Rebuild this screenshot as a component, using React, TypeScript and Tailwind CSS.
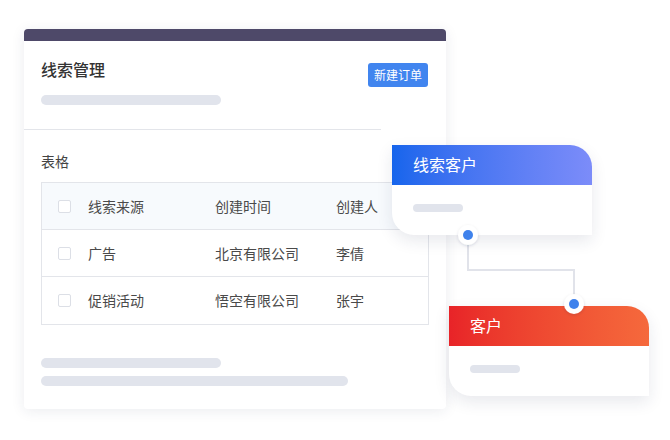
const font = { fontFamily: '"Noto Sans CJK SC", "Noto Sans", sans-serif' }

const rows = [
  ["线索来源", "创建时间", "创建人"],
  ["广告", "北京有限公司", "李倩"],
  ["促销活动", "悟空有限公司", "张宇"],
]

function Dot({ x, y }: { x: number; y: number }) {
  return (
    <g>
      <circle cx={x} cy={y} r={10} fill="#ffffff" filter="url(#dotShadow)" />
      <circle cx={x} cy={y} r={5} fill="#3f82ec" />
    </g>
  )
}

function FlowCard({
  title,
  className,
  headerClass,
}: {
  title: string
  className: string
  headerClass: string
}) {
  return (
    <div
      className={`absolute w-[200px] h-[90px] bg-white rounded-tr-[22px] rounded-bl-[22px] overflow-hidden shadow-[0_6px_16px_rgba(30,40,80,0.10)] ${className}`}
    >
      <div className={`h-[40px] flex items-center pl-[21px] pb-[2px] text-white text-[16px] ${headerClass}`}>{title}</div>
      <div className="mt-[19px] ml-[21px] w-[50px] h-[8px] rounded-full bg-[#e1e4ec]" />
    </div>
  )
}

export default function App() {
  return (
    <div className="relative w-[670px] h-[440px] bg-white overflow-hidden" style={font}>
      {/* main card */}
      <div className="ml-[24px] mt-[29px] w-[422px] h-[380px] bg-white rounded-[4px] overflow-hidden shadow-[0_2px_14px_rgba(30,40,80,0.09)]">
        <div className="h-[12px] bg-[#4e4969]" />
        <div className="flex justify-between items-start pl-[17px] pr-[18px]">
          <div>
            <div className="mt-[18px] text-[16px] leading-[20px] font-medium text-[#333]">线索管理</div>
            <div className="mt-[16px] w-[180px] h-[10px] rounded-full bg-[#e1e4ec]" />
          </div>
          <div className="mt-[22px] h-[24px] px-[6px] flex items-center rounded-[3px] bg-[#4185ef] text-white text-[12px]">
            新建订单
          </div>
        </div>
        <div className="mt-[24px] w-[357px] h-px bg-[#e3e5ea]" />
        <div className="px-[17px]">
          <div className="mt-[22px] text-[14px] leading-[18px] text-[#444]">表格</div>
          <div className="mt-[12px] border border-[#e3e5ea]">
            {rows.map((r, i) => (
              <div
                key={i}
                className={`grid grid-cols-[46px_127px_121px_1fr] items-center text-[14px] text-[#4a4a4a] ${
                  i === 0 ? "h-[46px] bg-[#f7fafd]" : i === 1 ? "h-[47px] border-t border-[#e3e5ea]" : "h-[48px] border-t border-[#e3e5ea]"
                }`}
              >
                <div className="pl-[16px]">
                  <div className="w-[13px] h-[13px] border border-[#dcdfe6] rounded-[2px] bg-white" />
                </div>
                <div>{r[0]}</div>
                <div>{r[1]}</div>
                <div>{r[2]}</div>
              </div>
            ))}
          </div>
          <div className="mt-[33px] w-[180px] h-[10px] rounded-full bg-[#e1e4ec]" />
          <div className="mt-[8px] w-[307px] h-[10px] rounded-full bg-[#e1e4ec]" />
        </div>
      </div>

      {/* connector */}
      <svg className="absolute left-0 top-0 z-10" width={670} height={440}>
        <path d="M468 235 V270 H574 V304" fill="none" stroke="#e1e3ea" strokeWidth={2} />
      </svg>

      <FlowCard
        title="线索客户"
        className="left-[392px] top-[145px] z-20"
        headerClass="bg-gradient-to-r from-[#1565ec] to-[#7c8cf9]"
      />
      <FlowCard
        title="客户"
        className="left-[449px] top-[306px] z-20"
        headerClass="bg-gradient-to-r from-[#e82328] to-[#f5693c]"
      />

      <svg className="absolute left-0 top-0 z-30 pointer-events-none" width={670} height={440}>
        <defs>
          <filter id="dotShadow" x="-50%" y="-50%" width="200%" height="200%">
            <feDropShadow dx="0" dy="1" stdDeviation="1.5" floodColor="#1e2850" floodOpacity="0.15" />
          </filter>
        </defs>
        <Dot x={468} y={235} />
        <Dot x={574} y={304} />
      </svg>
    </div>
  )
}
